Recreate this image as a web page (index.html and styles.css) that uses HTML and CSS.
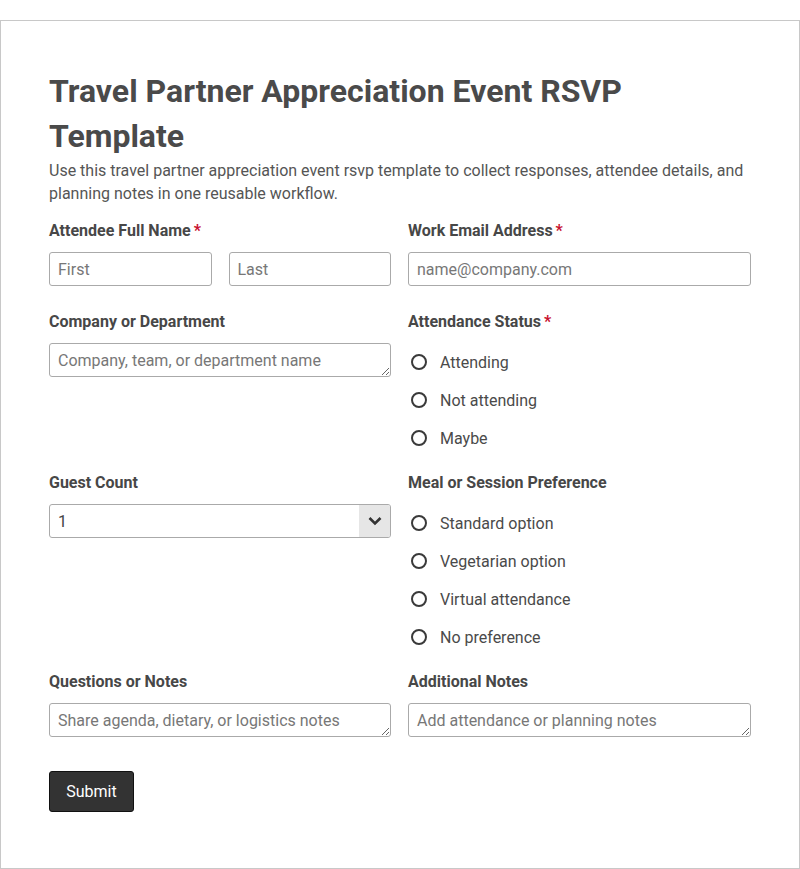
FILE: index.html
```html
<!DOCTYPE html>
<html lang="en">
<head>
<meta charset="utf-8">
<title>Travel Partner Appreciation Event RSVP Template</title>
<link rel="stylesheet" href="styles.css">
</head>
<body>
<div class="card">
  <h1 class="title">Travel Partner Appreciation Event RSVP Template</h1>
  <p class="desc">Use this travel partner appreciation event rsvp template to collect responses, attendee details, and planning notes in one reusable workflow.</p>
  <form class="form">
    <div class="field">
      <div class="label">Attendee Full Name<span class="req">*</span></div>
      <div class="name-row">
        <input class="input" type="text" placeholder="First">
        <input class="input" type="text" placeholder="Last">
      </div>
    </div>
    <div class="field">
      <div class="label">Work Email Address<span class="req">*</span></div>
      <input class="input" type="email" placeholder="name@company.com">
    </div>

    <div class="field">
      <div class="label">Company or Department</div>
      <textarea class="input area" rows="1" placeholder="Company, team, or department name"></textarea>
    </div>
    <div class="field">
      <div class="label">Attendance Status<span class="req">*</span></div>
      <div class="radios">
        <label class="radio"><span class="dot"></span>Attending</label>
        <label class="radio"><span class="dot"></span>Not attending</label>
        <label class="radio"><span class="dot"></span>Maybe</label>
      </div>
    </div>

    <div class="field">
      <div class="label">Guest Count</div>
      <div class="select">
        <span class="select-val">1</span>
        <span class="select-btn">
          <svg width="14" height="10" viewBox="0 0 14 10"><path d="M1.5 2 L7 7.5 L12.5 2" fill="none" stroke="#333" stroke-width="2.6"/></svg>
        </span>
      </div>
    </div>
    <div class="field">
      <div class="label">Meal or Session Preference</div>
      <div class="radios">
        <label class="radio"><span class="dot"></span>Standard option</label>
        <label class="radio"><span class="dot"></span>Vegetarian option</label>
        <label class="radio"><span class="dot"></span>Virtual attendance</label>
        <label class="radio"><span class="dot"></span>No preference</label>
      </div>
    </div>

    <div class="field">
      <div class="label">Questions or Notes</div>
      <textarea class="input area" rows="1" placeholder="Share agenda, dietary, or logistics notes"></textarea>
    </div>
    <div class="field">
      <div class="label">Additional Notes</div>
      <textarea class="input area" rows="1" placeholder="Add attendance or planning notes"></textarea>
    </div>
  </form>
  <button class="submit" type="button">Submit</button>
</div>
</body>
</html>
```

FILE: styles.css
```css
html, body {
  margin: 0;
  padding: 0;
  background: #fff;
}
body {
  padding-top: 20px;
  font-family: Roboto, "Liberation Sans", sans-serif;
  color: #444;
}
.card {
  box-sizing: border-box;
  width: 800px;
  height: 849px;
  border: 1px solid #c8c8c8;
  padding: 48px 48px 0 48px;
}
.title {
  margin: 0;
  font-size: 32px;
  line-height: 45px;
  font-weight: 700;
  color: #4a4a4a;
}
.desc {
  margin: 0 0 15px 0;
  font-size: 16px;
  line-height: 23px;
  color: #555;
}
.form {
  display: grid;
  grid-template-columns: 342px 1fr;
  column-gap: 17px;
  row-gap: 25px;
}
.label {
  font-size: 16px;
  line-height: 22px;
  font-weight: 700;
  color: #474747;
  margin-bottom: 10px;
}
.req {
  color: #c8102e;
  margin-left: 3px;
}
.name-row {
  display: grid;
  grid-template-columns: 1fr 1fr;
  column-gap: 17px;
}
.input {
  box-sizing: border-box;
  display: block;
  width: 100%;
  height: 34px;
  margin: 0;
  padding: 6px 8px;
  border: 1px solid #aaa;
  border-radius: 3px;
  font-family: Roboto, "Liberation Sans", sans-serif;
  font-size: 16px;
  line-height: 20px;
  color: #444;
  background: #fff;
}
.input::placeholder {
  color: #777;
}
.area {
  resize: vertical;
  overflow: hidden;
  padding-top: 7px;
  padding-bottom: 5px;
}
.radios {
  display: flex;
  flex-direction: column;
  row-gap: 20px;
  padding-top: 10px;
}
.radio {
  display: flex;
  align-items: center;
  height: 18px;
  font-size: 16px;
  color: #4a4a4a;
}
.dot {
  box-sizing: border-box;
  width: 16px;
  height: 16px;
  border: 2px solid #3a3a3a;
  border-radius: 50%;
  margin-left: 3px;
  margin-right: 13px;
}
.select {
  box-sizing: border-box;
  display: flex;
  height: 34px;
  border: 1px solid #aaa;
  border-radius: 3px;
  overflow: hidden;
}
.select-val {
  flex: 1;
  padding-left: 8px;
  font-size: 16px;
  line-height: 33px;
  color: #444;
}
.select-btn {
  width: 31px;
  background: #e6e6e6;
  display: flex;
  align-items: center;
  justify-content: center;
}
.submit {
  margin-top: 34px;
  box-sizing: border-box;
  width: 85px;
  height: 41px;
  padding: 0;
  background: #333;
  color: #fff;
  border: 1px solid #111;
  border-radius: 3px;
  font-family: Roboto, "Liberation Sans", sans-serif;
  font-size: 16px;
}
```
